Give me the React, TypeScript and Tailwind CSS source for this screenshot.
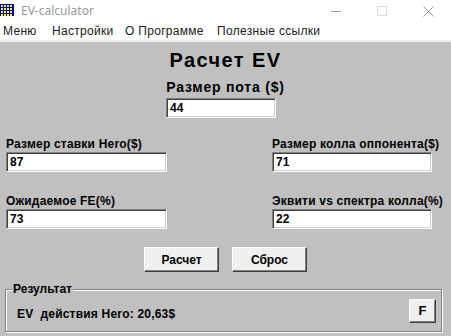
import React from "react";

const sunken =
  "bg-white border border-t-[#808080] border-l-[#808080] border-b-white border-r-white shadow-[inset_1px_1px_0_#404040,inset_-1px_-1px_0_#d4d0c8] px-[3px] text-[12px] font-bold text-black outline-none";

const raised =
  "bg-[#f0f0f0] border border-t-white border-l-white border-b-[#404040] border-r-[#404040] shadow-[inset_-1px_-1px_0_#808080] text-[12px] font-bold text-black";

const AppIcon = () => (
  <svg width="14" height="14" viewBox="0 0 14 14">
    <rect x="0" y="1" width="14" height="12" fill="#0000c0" />
    {[2, 5, 8, 11].map((y) =>
      [1, 4, 7, 10].map((x) => (
        <rect key={`${x}-${y}`} x={x} y={y} width="2" height="2" fill="#ffff00" />
      ))
    )}
  </svg>
);

type FieldProps = { label: string; value: string; width: string };

const Field = ({ label, value, width }: FieldProps) => (
  <div className="flex flex-col">
    <div className="text-[12px] font-bold leading-[14px] h-[14px] whitespace-nowrap tracking-[0.2px]">{label}</div>
    <input className={`${sunken} ${width} h-[20px] mt-[1px]`} defaultValue={value} />
  </div>
);

export default function App() {
  return (
    <div
      className="w-[451px] h-[336px] flex flex-col overflow-hidden bg-white"
      style={{ fontFamily: '"Liberation Sans", Arial, sans-serif' }}
    >
      {/* title bar */}
      <div className="h-[22px] flex items-center bg-white">
        <div className="mt-[-2px]">
          <AppIcon />
        </div>
        <span
          className="ml-[7px] text-[12px] text-[#999999]"
          style={{ fontFamily: '"Noto Sans", "Open Sans", sans-serif' }}
        >
          EV-calculator
        </span>
        <div className="flex-1" />
        <div className="w-[46px] flex justify-center">
          <div className="w-[10px] h-px bg-[#9a9a9a]" />
        </div>
        <div className="w-[46px] flex justify-center">
          <div className="w-[10px] h-[10px] border border-[#dcdcdc]" />
        </div>
        <div className="w-[46px] flex justify-center">
          <svg width="11" height="11" viewBox="0 0 11 11">
            <path d="M0.5 0.5 L10.5 10.5 M10.5 0.5 L0.5 10.5" stroke="#999" strokeWidth="1" />
          </svg>
        </div>
      </div>

      {/* menu bar */}
      <div
        className="h-[18px] flex items-center text-[12px] text-[#222] bg-white whitespace-nowrap"
        style={{ fontFamily: '"Liberation Sans", Arial, sans-serif' }}
      >
        <span className="ml-[3px] w-[49px] tracking-[0.3px]">Меню</span>
        <span className="w-[73px] tracking-[0.3px]">Настройки</span>
        <span className="w-[92px] tracking-[0.3px]">О Программе</span>
        <span className="tracking-[0.3px]">Полезные ссылки</span>
      </div>
      <div className="h-[2px] bg-[#f0f0f0]" />

      {/* body */}
      <div className="flex-1 bg-[#c0c0c0] flex flex-col text-black">
        <div className="mt-[8px] text-center text-[20px] font-bold leading-[20px] tracking-[1.4px]">Расчет EV</div>
        <div className="mt-[9px] text-center text-[14px] font-bold leading-[16px] tracking-[0.8px]">Размер пота ($)</div>
        <input className={`${sunken} w-[110px] h-[20px] ml-[166px] mt-[3px]`} defaultValue="44" />

        <div className="mt-[19px] ml-[6px] grid grid-cols-[266px_160px] gap-y-[22px]">
          <Field label="Размер ставки Hero($)" value="87" width="w-[161px]" />
          <Field label="Размер колла оппонента($)" value="71" width="w-[160px]" />
          <Field label="Ожидаемое FE(%)" value="73" width="w-[161px]" />
          <Field label="Эквити vs спектра колла(%)" value="22" width="w-[160px]" />
        </div>

        <div className="mt-[18px] flex gap-[13px] ml-[144px]">
          <button className={`${raised} w-[75px] h-[25px]`}>Расчет</button>
          <button className={`${raised} w-[75px] h-[25px]`}>Сброс</button>
        </div>

        <div className="relative mt-[17px] ml-[5px] w-[437px] h-[43px] border border-[#808080] shadow-[1px_1px_0_#fff,inset_1px_1px_0_#fff] flex items-start">
          <span className="absolute -top-[8px] left-[6px] bg-[#c0c0c0] px-[1px] text-[12px] font-bold leading-[14px]">
            Результат
          </span>
          <span className="ml-[11px] mt-[17px] text-[12px] font-bold leading-[14px] whitespace-pre tracking-[0.2px]">
            EV  действия Hero: 20,63$
          </span>
          <div className="flex-1" />
          <button className={`${raised} w-[27px] h-[24px] text-[13px] mr-[5px] mt-[9px]`}>F</button>
        </div>
      </div>
    </div>
  );
}
